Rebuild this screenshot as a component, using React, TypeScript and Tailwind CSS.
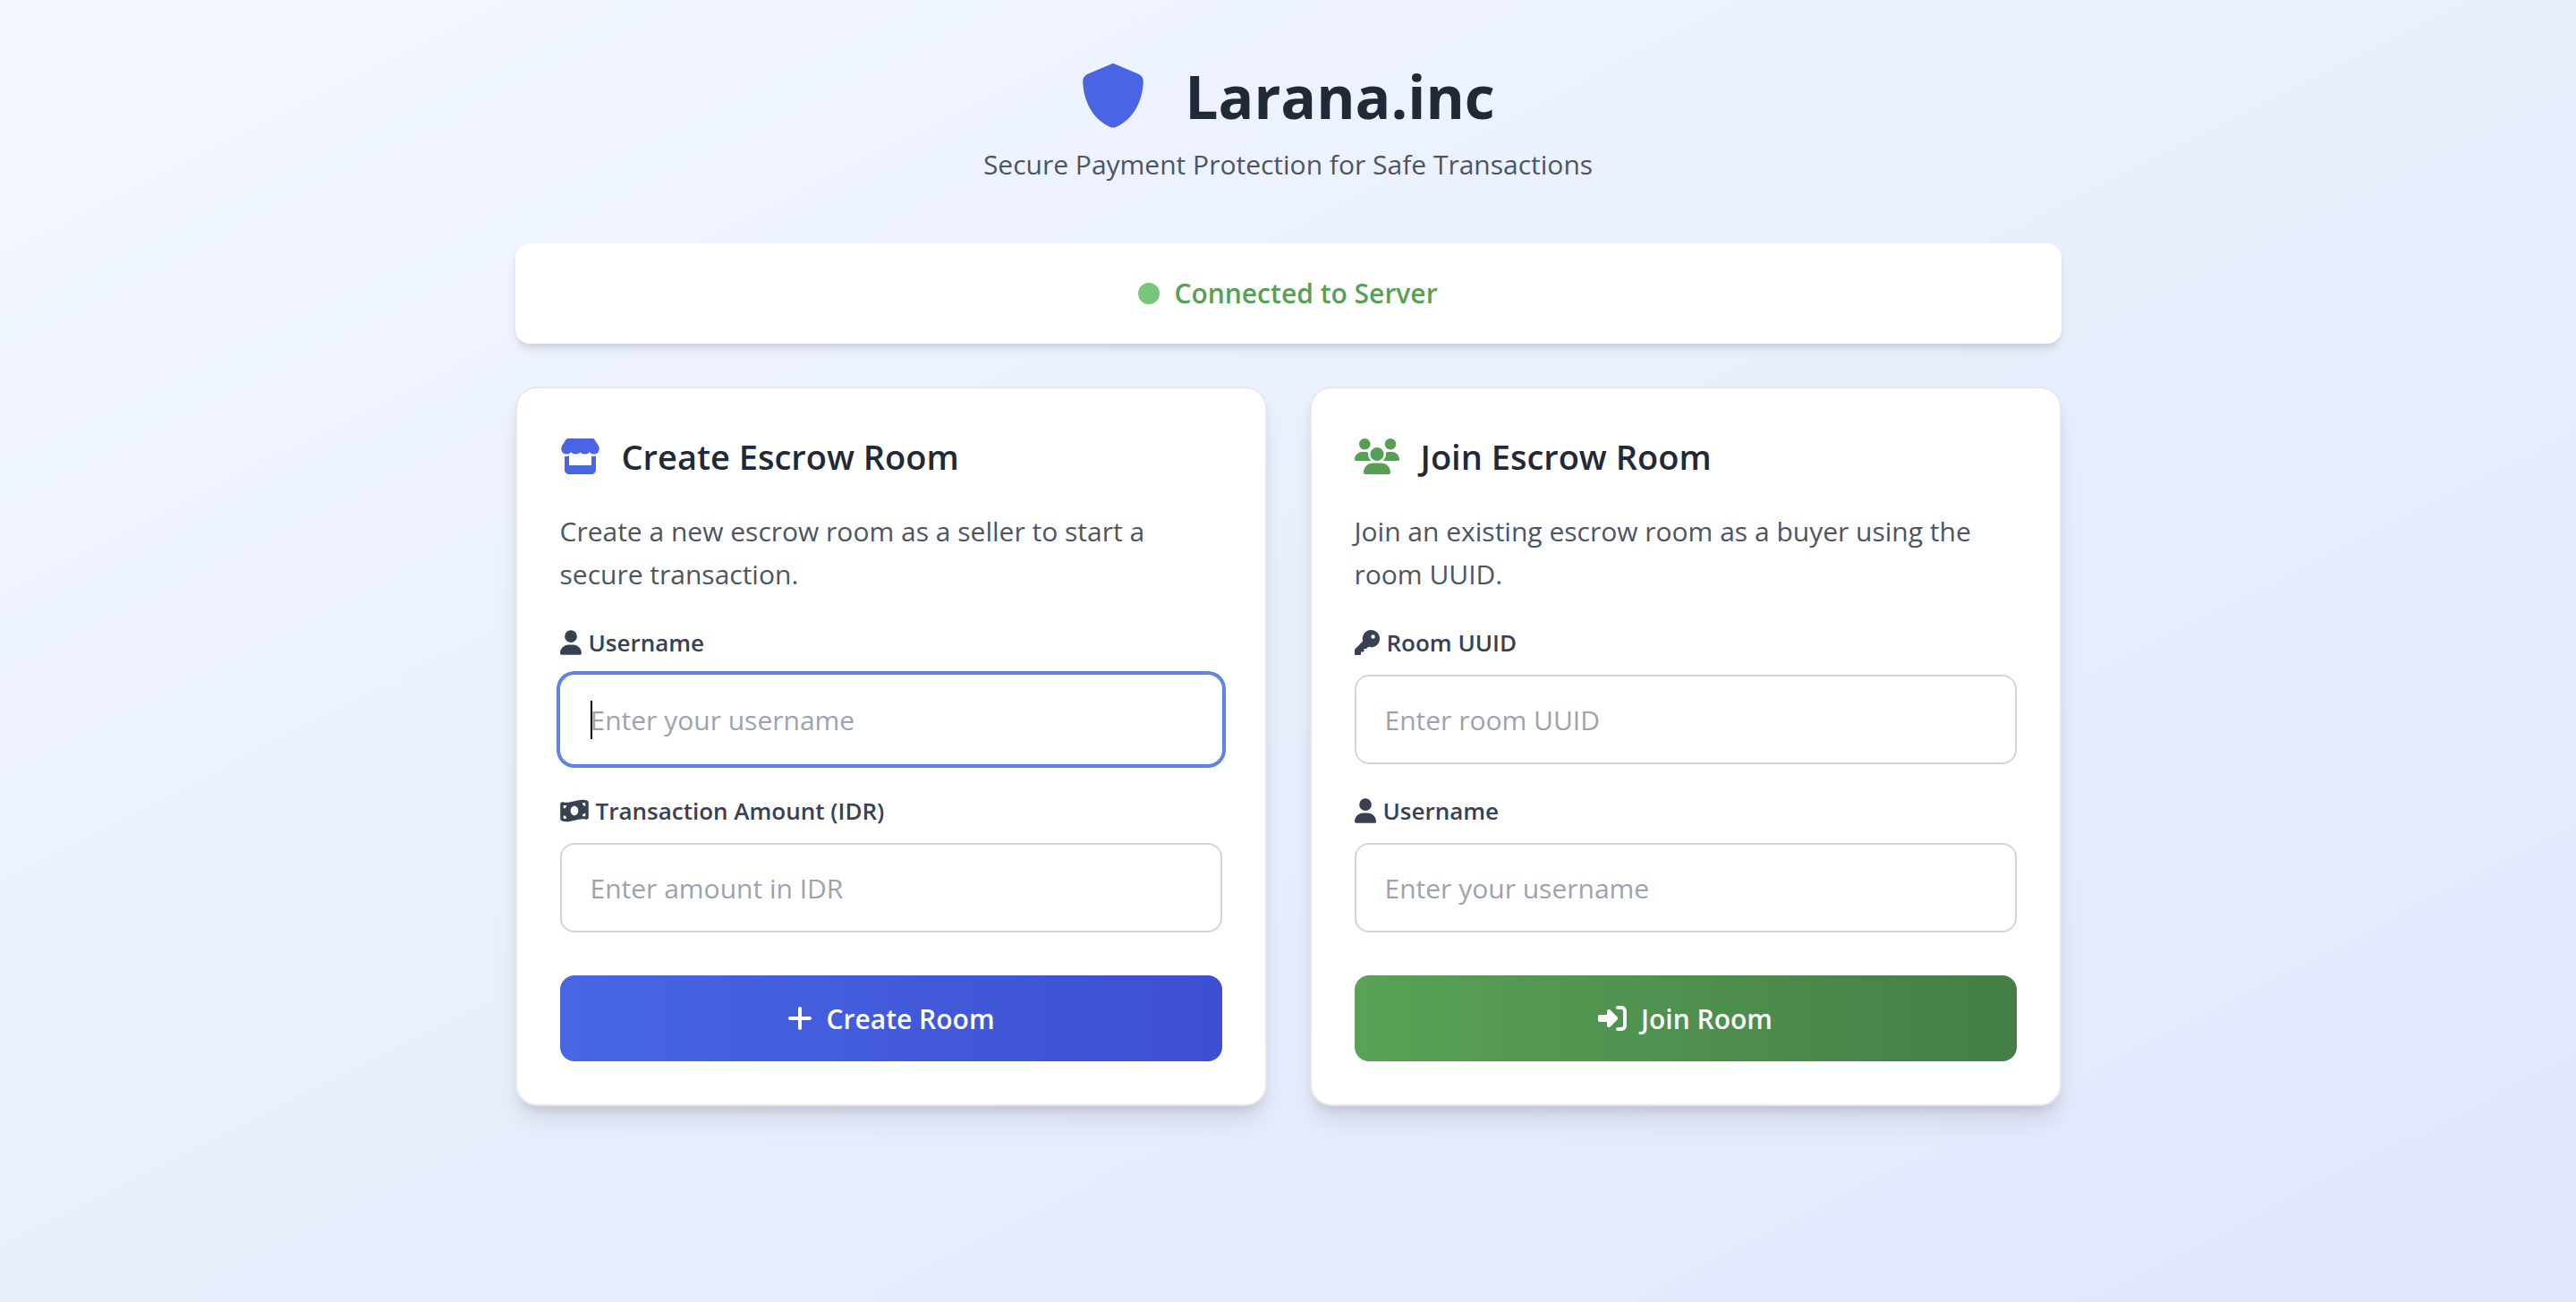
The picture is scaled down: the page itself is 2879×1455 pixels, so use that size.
import { useId } from "react";
import type { ReactNode } from "react";
import {
  FaKey,
  FaMoneyBillWave,
  FaPlus,
  FaRightToBracket,
  FaShield,
  FaStore,
  FaUser,
  FaUsers,
} from "react-icons/fa6";

type FieldProps = {
  label: string;
  placeholder: string;
  icon: ReactNode;
  focused?: boolean;
};

function Field({ label, placeholder, icon, focused = false }: FieldProps) {
  const id = useId();
  return (
    <div>
      <label
        htmlFor={id}
        className="mb-4 flex items-center gap-2 text-[26px] leading-10 font-semibold text-[#374151]"
      >
        {icon}
        {label}
      </label>
      <div className="relative">
        <input
          id={id}
          type="text"
          placeholder={placeholder}
          autoFocus={focused}
          className="block h-[100px] w-full rounded-2xl border-2 border-[#d1d5db] bg-white px-8 text-[30px] text-[#1f2937] caret-transparent outline-none placeholder:text-[#9ca3af] focus:border-transparent focus:ring-4 focus:ring-[#5f82ec]"
        />
        {focused && <span className="absolute top-[29px] left-[34px] h-[43px] w-0.5 bg-black" />}
      </div>
    </div>
  );
}

type CardProps = {
  title: string;
  description: string;
  icon: ReactNode;
  children: ReactNode;
};

function Card({ title, description, icon, children }: CardProps) {
  return (
    <section className="rounded-3xl border-2 border-[#e5e7eb] bg-white p-12 shadow-[0_20px_30px_-6px_rgba(0,0,0,0.1),0_8px_12px_-4px_rgba(0,0,0,0.1)]">
      <div className="mb-8 flex items-center gap-6">
        {icon}
        <h2 className="text-[38px] leading-14 font-semibold text-[#1f2937]">{title}</h2>
      </div>
      <p className="mb-8 text-[30px] leading-12 text-[#4b5563]">{description}</p>
      <form className="flex flex-col gap-8" onSubmit={(event) => event.preventDefault()}>
        {children}
      </form>
    </section>
  );
}

const buttonBase =
  "mt-4 flex h-24 w-full items-center justify-center gap-4 rounded-2xl text-[30px] font-semibold text-white";

export default function App() {
  return (
    <div className="min-h-screen bg-linear-to-br from-[#f2f7ff] to-[#e1e7fc] px-8 py-16 font-['Open_Sans',sans-serif]">
      <div className="mx-auto max-w-[1728px]">
        <header className="mb-16 text-center">
          <h1 className="mb-2.5 flex items-center justify-center gap-11 text-[66px] leading-[86px] font-bold text-[#1f2937]">
            <FaShield className="size-18 text-[#4965e3]" />
            Larana.inc
          </h1>
          <p className="text-[30px] leading-12 text-[#4b5563]">
            Secure Payment Protection for Safe Transactions
          </p>
        </header>

        <div
          role="status"
          className="mb-12 flex items-center justify-center gap-4 rounded-2xl bg-white p-8 text-[30px] leading-12 font-semibold text-[#589f56] shadow-[0_8px_12px_-2px_rgba(0,0,0,0.1),0_4px_8px_-4px_rgba(0,0,0,0.1)]"
        >
          <span className="size-6 rounded-full bg-[#78c67a]" />
          Connected to Server
        </div>

        <main className="grid grid-cols-2 gap-12">
          <Card
            title="Create Escrow Room"
            description="Create a new escrow room as a seller to start a secure transaction."
            icon={<FaStore className="h-10 w-[45px] text-[#4965e3]" />}
          >
            <Field
              label="Username"
              placeholder="Enter your username"
              icon={<FaUser className="h-7 w-6" />}
              focused
            />
            <Field
              label="Transaction Amount (IDR)"
              placeholder="Enter amount in IDR"
              icon={<FaMoneyBillWave className="h-7 w-8" />}
            />
            <button type="submit" className={`${buttonBase} bg-linear-to-r from-[#4866e4] to-[#3c4fd0]`}>
              <FaPlus className="h-8 w-7" />
              Create Room
            </button>
          </Card>
          <Card
            title="Join Escrow Room"
            description="Join an existing escrow room as a buyer using the room UUID."
            icon={<FaUsers className="h-10 w-[50px] text-[#589f56]" />}
          >
            <Field
              label="Room UUID"
              placeholder="Enter room UUID"
              icon={<FaKey className="size-7" />}
            />
            <Field
              label="Username"
              placeholder="Enter your username"
              icon={<FaUser className="h-7 w-6" />}
            />
            <button type="submit" className={`${buttonBase} bg-linear-to-r from-[#59a257] to-[#447e45]`}>
              <FaRightToBracket className="size-8" />
              Join Room
            </button>
          </Card>
        </main>
      </div>
    </div>
  );
}
